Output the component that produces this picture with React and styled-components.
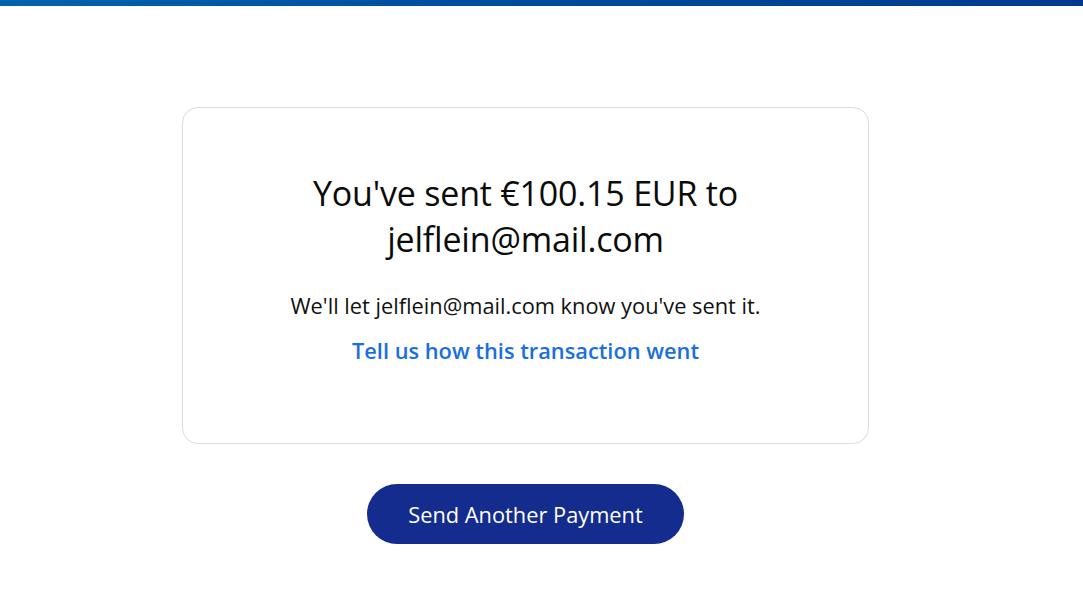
import styled, { createGlobalStyle } from "styled-components";

const GlobalStyle = createGlobalStyle`
	html, body {
		margin: 0;
		padding: 0;
		background: #ffffff;
		font-family: "Open Sans", Lato, sans-serif;
		color: #000000;
	}
`;

const TopBar = styled.div`
	height: 6px;
	background: linear-gradient(90deg, #0063b0 0%, #004b9a 50%, #003a8f 100%);
`;

const Main = styled.main`
	width: 687px;
	margin: 101px 0 0 182px;
	display: flex;
	flex-direction: column;
	align-items: center;
`;

const Card = styled.section`
	box-sizing: border-box;
	width: 100%;
	height: 337px;
	border: 1px solid #dcdcdc;
	border-radius: 16px;
	display: flex;
	flex-direction: column;
	align-items: center;
	padding-top: 62px;
`;

const Title = styled.h1`
	margin: 0;
	width: 480px;
	text-align: center;
	font-size: 34px;
	font-weight: 400;
	line-height: 46px;
	letter-spacing: -0.2px;
	color: #0b0b0b;
`;

const Note = styled.p`
	margin: 30px 0 0;
	font-size: 21.8px;
	line-height: 28px;
	color: #111111;
`;

const FeedbackLink = styled.a`
	margin-top: 17px;
	font-size: 21.8px;
	line-height: 28px;
	font-weight: 600;
	color: #1a6fe0;
	text-decoration: none;
	cursor: pointer;
`;

const PrimaryButton = styled.button`
	margin-top: 40px;
	width: 317px;
	height: 60px;
	border: none;
	border-radius: 30px;
	background: #142c8e;
	color: #ffffff;
	font-family: "Open Sans", Lato, sans-serif;
	font-size: 21.8px;
	font-weight: 500;
	cursor: pointer;
`;

export default function App() {
	return (
		<>
			<GlobalStyle />
			<TopBar />
			<Main>
				<Card>
					<Title>You've sent €100.15 EUR to jelflein@mail.com</Title>
					<Note>We'll let jelflein@mail.com know you've sent it.</Note>
					<FeedbackLink>Tell us how this transaction went</FeedbackLink>
				</Card>
				<PrimaryButton>Send Another Payment</PrimaryButton>
			</Main>
		</>
	);
}
